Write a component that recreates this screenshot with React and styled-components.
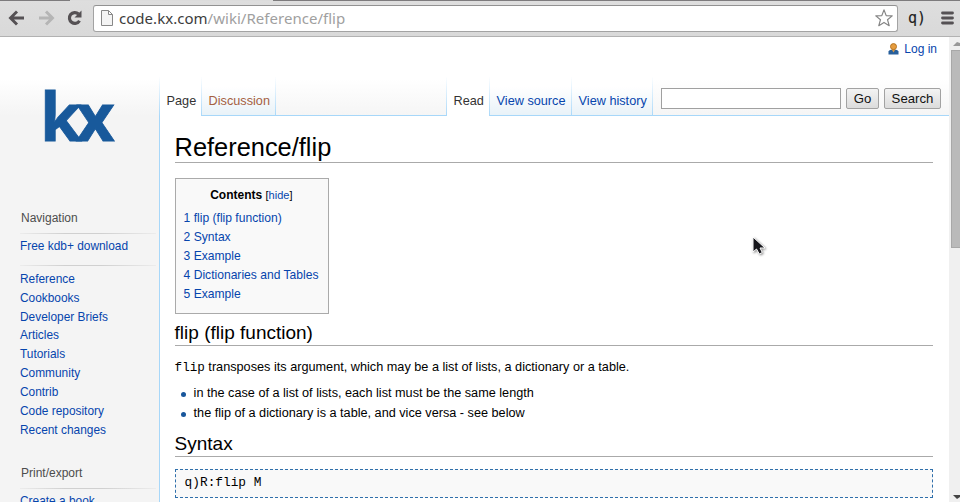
import React from 'react';
import styled, { createGlobalStyle } from 'styled-components';

const Global = createGlobalStyle`
  * { box-sizing: border-box; }
  body { margin: 0; background: #fff; overflow: hidden; }
  ul { list-style: none; margin: 0; padding: 0; }
  h1, h2, h3, p { margin: 0; font-weight: normal; }
`;

const Browser = styled.div`
  position: relative;
  display: flex;
  flex-direction: column;
  width: 960px;
  height: 502px;
  overflow: hidden;
  color: #000;
  font-family: 'Liberation Sans', Arial, sans-serif;
  font-size: 12px;
`;

const Toolbar = styled.div`
  flex: none;
  display: flex;
  align-items: center;
  height: 37px;
  padding: 0;
  background: linear-gradient(90deg, #7d7b7d 70px, #dcdcdc 70px 273px, #7d7b7d 273px) 0 0 / 100% 1px no-repeat,
    linear-gradient(#dedede, #d9d9d9);
  border-bottom: 1px solid #b2b2b2;
  svg { flex: none; display: block; }
`;

const ToolIcon = styled.svg`
  margin-left: ${p => p.$gap}px;
`;

const Address = styled.div`
  display: flex;
  align-items: center;
  width: 805px;
  height: 27px;
  margin-left: 10px;
  padding: 0 4px 0 7px;
  border: 1px solid #a3a3a3;
  border-top-color: #929292;
  border-radius: 3px;
  background: #fff;
`;

const Url = styled.div`
  flex: 1;
  margin-left: 6px;
  color: #a0a0a0;
  font: 15px/20px 'Noto Sans', sans-serif;
  letter-spacing: 0.03px;
  b { color: #3c3c3c; font-weight: 400; }
`;

const Extension = styled.div`
  width: 20px;
  margin-left: 9px;
  color: #222;
  font: 15px/20px 'DejaVu Sans Mono', monospace;
  -webkit-text-stroke: 0.15px #222;
  text-align: center;
`;

const Viewport = styled.div`
  flex: 1;
  min-height: 0;
  display: flex;
`;

const Wiki = styled.div`
  display: grid;
  grid-template-columns: 159px 790px;
  flex: none;
  width: 949px;
  overflow: hidden;
`;

const Sidebar = styled.aside`
  display: flex;
  flex-direction: column;
  height: 465px;
  background: linear-gradient(#fff 42px, #f4f4f4 79px);
  overflow: hidden;
`;

const Logo = styled.div`
  flex: none;
  height: 92px;
  margin-top: 32px;
  padding-left: 40px;
  color: #18599b;
  font: 700 67px/92px 'Open Sans', sans-serif;
  letter-spacing: -5.5px;
  -webkit-text-stroke: 0.8px #18599b;
`;

const Portal = styled.section`
  padding-left: 20px;
  margin-top: ${p => p.$top}px;
`;

const PortalTitle = styled.h3`
  height: 22px;
  padding-left: 1px;
  color: #4d4d4d;
  font-size: 12px;
  line-height: 14px;
`;

const Rule = styled.div`
  height: 1px;
  margin-right: 3px;
  background: linear-gradient(90deg, #ececec, #d0d0d0 33%, #d0d0d0 60%, #ececec);
`;

const NavList = styled.ul`
  padding-top: ${p => p.$top}px;
  li { height: 18.85px; line-height: 18px; font-size: 11.9px; white-space: nowrap; }
`;

const Link = styled.a`
  color: ${p => (p.$missing ? '#a5603f' : '#0645ad')};
`;

const Main = styled.main`
  display: flex;
  flex-direction: column;
  min-width: 0;
`;

const Header = styled.header`
  flex: none;
  height: 79px;
  background: linear-gradient(#fff 42px, #f5f5f5 79px);
`;

const Personal = styled.div`
  display: flex;
  justify-content: flex-end;
  align-items: center;
  gap: 5px;
  height: 23px;
  padding-right: 12px;
`;

const TabBar = styled.div`
  display: flex;
  height: 39px;
  margin-top: 17px;
`;

const Tab = styled.div`
  flex: none;
  width: ${p => p.$width}px;
  padding: 16px 0 0 6.6px;
  border-left: 1px solid;
  border-image: linear-gradient(#fff, #a7d7f9) 1;
  background: ${p => (p.$active ? '#fff' : 'linear-gradient(#fff 10px, #e8f2f8)')};
  box-shadow: ${p => (p.$active ? 'none' : 'inset 0 -1px #a7d7f9')};
  font-size: 12.7px;
  line-height: 17px;
  white-space: nowrap;
  color: #333;
`;

const Filler = styled.div`
  width: ${p => p.$width}px;
  border-left: 1px solid;
  border-image: linear-gradient(#fff, #a7d7f9) 1;
  box-shadow: inset 0 -1px #a7d7f9;
`;

const SearchBar = styled.div`
  flex: 1;
  display: flex;
  align-items: flex-start;
  padding: 11px 0 0 8px;
  border-left: 1px solid;
  border-image: linear-gradient(#fff, #a7d7f9) 1;
  box-shadow: inset 0 -1px #a7d7f9;
`;

const SearchInput = styled.input`
  width: 180px;
  height: 21px;
  padding: 0;
  border: 1px solid #a0a0a0;
  background: #fff;
`;

const Button = styled.button`
  width: ${p => p.$width}px;
  height: 21px;
  margin-left: 5px;
  padding: 0 0 1px;
  border: 1px solid #a2a2a2;
  border-radius: 2px;
  background: linear-gradient(#f3f3f3, #dcdcdc);
  color: #111;
  font: 13.2px/17px 'Liberation Sans', Arial, sans-serif;
`;

const Article = styled.article`
  flex: 1;
  min-height: 0;
  padding: 15px 16px 0 14.6px;
  border-left: 1px solid #a7d7f9;
  background: #fff;
  overflow: hidden;
`;

const Title = styled.h1`
  height: 32px;
  border-bottom: 1px solid #aaa;
  font-size: 25.4px;
  line-height: 33px;
`;

const Heading = styled.h2`
  height: 26px;
  border-bottom: 1px solid #aaa;
  font-size: 19px;
  line-height: 25px;
`;

const Contents = styled.nav`
  width: 154.5px;
  height: 136px;
  margin: 15px 0 6px;
  padding: 8px;
  border: 1px solid #aaa;
  background: #f9f9f9;
  li { height: 19.1px; line-height: 19px; font-size: 12.1px; white-space: nowrap; }
`;

const ContentsTitle = styled.div`
  height: 22px;
  padding-right: 1px;
  line-height: 17px;
  text-align: center;
  small { font-size: 11px; }
`;

const Paragraph = styled.p`
  margin-top: 12px;
  height: 18px;
  font-size: 12.7px;
  line-height: 18px;
  code { font: 12.6px 'Liberation Mono', monospace; }
`;

const Bullets = styled.ul`
  margin: 8px 0 8px;
  li {
    display: flex;
    align-items: center;
    height: 19.7px;
    font-size: 12.68px;
    line-height: 19px;
  }
  li::before {
    content: '';
    width: 5px;
    height: 5px;
    margin: 1px 8px 0 6px;
    border-radius: 50%;
    background: #18569b;
  }
`;

const Code = styled.pre`
  height: 29px;
  margin: 12px 0 0;
  padding: 0 9px;
  border: 1px dashed #2f6fab;
  background: #f9f9f9;
  font: 12.8px/25px 'Liberation Mono', monospace;
`;

const Scrollbar = styled.div`
  display: flex;
  flex-direction: column;
  align-items: flex-end;
  width: 11px;
  height: 465px;
  background: #f0f0f0;
  svg { display: block; flex: none; }
`;

const Thumb = styled.div`
  width: 9px;
  height: 198px;
  margin-bottom: auto;
  border: 1px solid #a8a8a8;
  border-right: 0;
  background: #bababa;
`;

const Pointer = styled.svg`
  position: absolute;
  left: 751px;
  top: 235px;
  filter: drop-shadow(1px 1px 1px rgba(0, 0, 0, 0.45));
`;

const pages = ['Reference', 'Cookbooks', 'Developer Briefs', 'Articles', 'Tutorials', 'Community', 'Contrib', 'Code repository', 'Recent changes'];
const toc = ['1 flip (flip function)', '2 Syntax', '3 Example', '4 Dictionaries and Tables', '5 Example'];

function Arrow({ gap, color, forward }) {
  return (
    <ToolIcon $gap={gap} width="17" height="16" viewBox="0 0 17 16" fill="none" stroke={color} strokeWidth="2.9">
      <path d={forward ? 'M1 8h13M8 1.5 14.5 8 8 14.5' : 'M16 8H3M9 1.5 2.5 8 9 14.5'} />
    </ToolIcon>
  );
}

export default function App() {
  return (
    <>
      <Global />
      <Browser>
        <Toolbar>
          <Arrow gap={8} color="#555154" />
          <Arrow gap={13} color="#b5b5b5" forward />
          <ToolIcon $gap={12} width="16" height="16" viewBox="0 0 16 16">
            <path d="M11.5 4A5.4 5.4 0 1 0 12.5 10.7" fill="none" stroke="#555154" strokeWidth="3.2" />
            <path d="M14.5 .5v7H7.5z" fill="#555154" />
          </ToolIcon>
          <Address>
            <svg width="12" height="16" viewBox="0 0 12 16" fill="#f4f4f4" stroke="#888">
              <path d="M.5.5h7l4 4v11H.5zM7.5.5v4h4" />
            </svg>
            <Url><b>code.kx.com</b>/wiki/Reference/flip</Url>
            <svg width="18" height="18" viewBox="0 0 18 18" fill="#fff" stroke="#858585" strokeWidth="1.2" strokeLinejoin="round">
              <path d="m9 .9 2.2 5.7 6 .3-4.7 3.8 1.7 6L9 13.4l-5.2 3.3 1.7-6L.8 6.9l6-.3z" />
            </svg>
          </Address>
          <Extension>q)</Extension>
          <ToolIcon $gap={14} width="13" height="14" viewBox="0 0 13 14" stroke="#555154" strokeWidth="2.8" strokeLinecap="round">
            <path d="M1.5 2h10M1.5 7h10M1.5 12h10" />
          </ToolIcon>
        </Toolbar>
        <Viewport>
          <Wiki>
            <Sidebar>
              <Logo>kx</Logo>
              <Portal $top={50}>
                <PortalTitle>Navigation</PortalTitle>
                <Rule />
                <NavList $top={3}><li><Link>Free kdb+ download</Link></li></NavList>
              </Portal>
              <Portal $top={9}>
                <Rule />
                <NavList $top={4}>
                  {pages.map(name => <li key={name}><Link>{name}</Link></li>)}
                </NavList>
              </Portal>
              <Portal $top={27}>
                <PortalTitle>Print/export</PortalTitle>
                <Rule />
                <NavList $top={3}><li><Link>Create a book</Link></li></NavList>
              </Portal>
            </Sidebar>
            <Main>
              <Header>
                <Personal>
                  <svg width="11" height="12" viewBox="0 0 11 12">
                    <path d="M.5 11.5V8.6Q1 6.6 5.5 6.6T10.5 8.6v2.9z" fill="#275f9c" />
                    <path d="M3.5 6h4L5.5 9.5z" fill="#d99a45" />
                    <circle cx="5.5" cy="3.6" r="3" fill="#e69c3e" stroke="#b57524" />
                  </svg>
                  <Link>Log in</Link>
                </Personal>
                <TabBar>
                  <Tab $active $width={42}>Page</Tab>
                  <Tab $width={74}><Link $missing>Discussion</Link></Tab>
                  <Filler $width={171} />
                  <Tab $active $width={43}>Read</Tab>
                  <Tab $width={82}><Link>View source</Link></Tab>
                  <Tab $width={81}><Link>View history</Link></Tab>
                  <SearchBar>
                    <SearchInput aria-label="Search" />
                    <Button $width={33}>Go</Button>
                    <Button $width={57}>Search</Button>
                  </SearchBar>
                </TabBar>
              </Header>
              <Article>
                <Title>Reference/flip</Title>
                <Contents>
                  <ContentsTitle><b>Contents</b> <small>[<Link>hide</Link>]</small></ContentsTitle>
                  <ul>{toc.map(entry => <li key={entry}><Link>{entry}</Link></li>)}</ul>
                </Contents>
                <Heading>flip (flip function)</Heading>
                <Paragraph><code>flip</code> transposes its argument, which may be a list of lists, a dictionary or a table.</Paragraph>
                <Bullets>
                  <li>in the case of a list of lists, each list must be the same length</li>
                  <li>the flip of a dictionary is a table, and vice versa - see below</li>
                </Bullets>
                <Heading>Syntax</Heading>
                <Code>q)R:flip M</Code>
              </Article>
            </Main>
          </Wiki>
          <Scrollbar>
            <svg width="9" height="13" viewBox="0 0 9 13"><path d="M2 9h7V6L6 5z" fill="#999" /></svg>
            <Thumb />
            <svg width="9" height="9" viewBox="0 0 9 9"><path d="M2 2h7v2L6 6z" fill="#444" /></svg>
          </Scrollbar>
        </Viewport>
        <Pointer width="16" height="22" viewBox="0 0 16 22">
          <path d="M2 2v15l3.5-3 2.8 5 3-1.5L9 13h5z" fill="#17171c" stroke="#fff" />
        </Pointer>
      </Browser>
    </>
  );
}
